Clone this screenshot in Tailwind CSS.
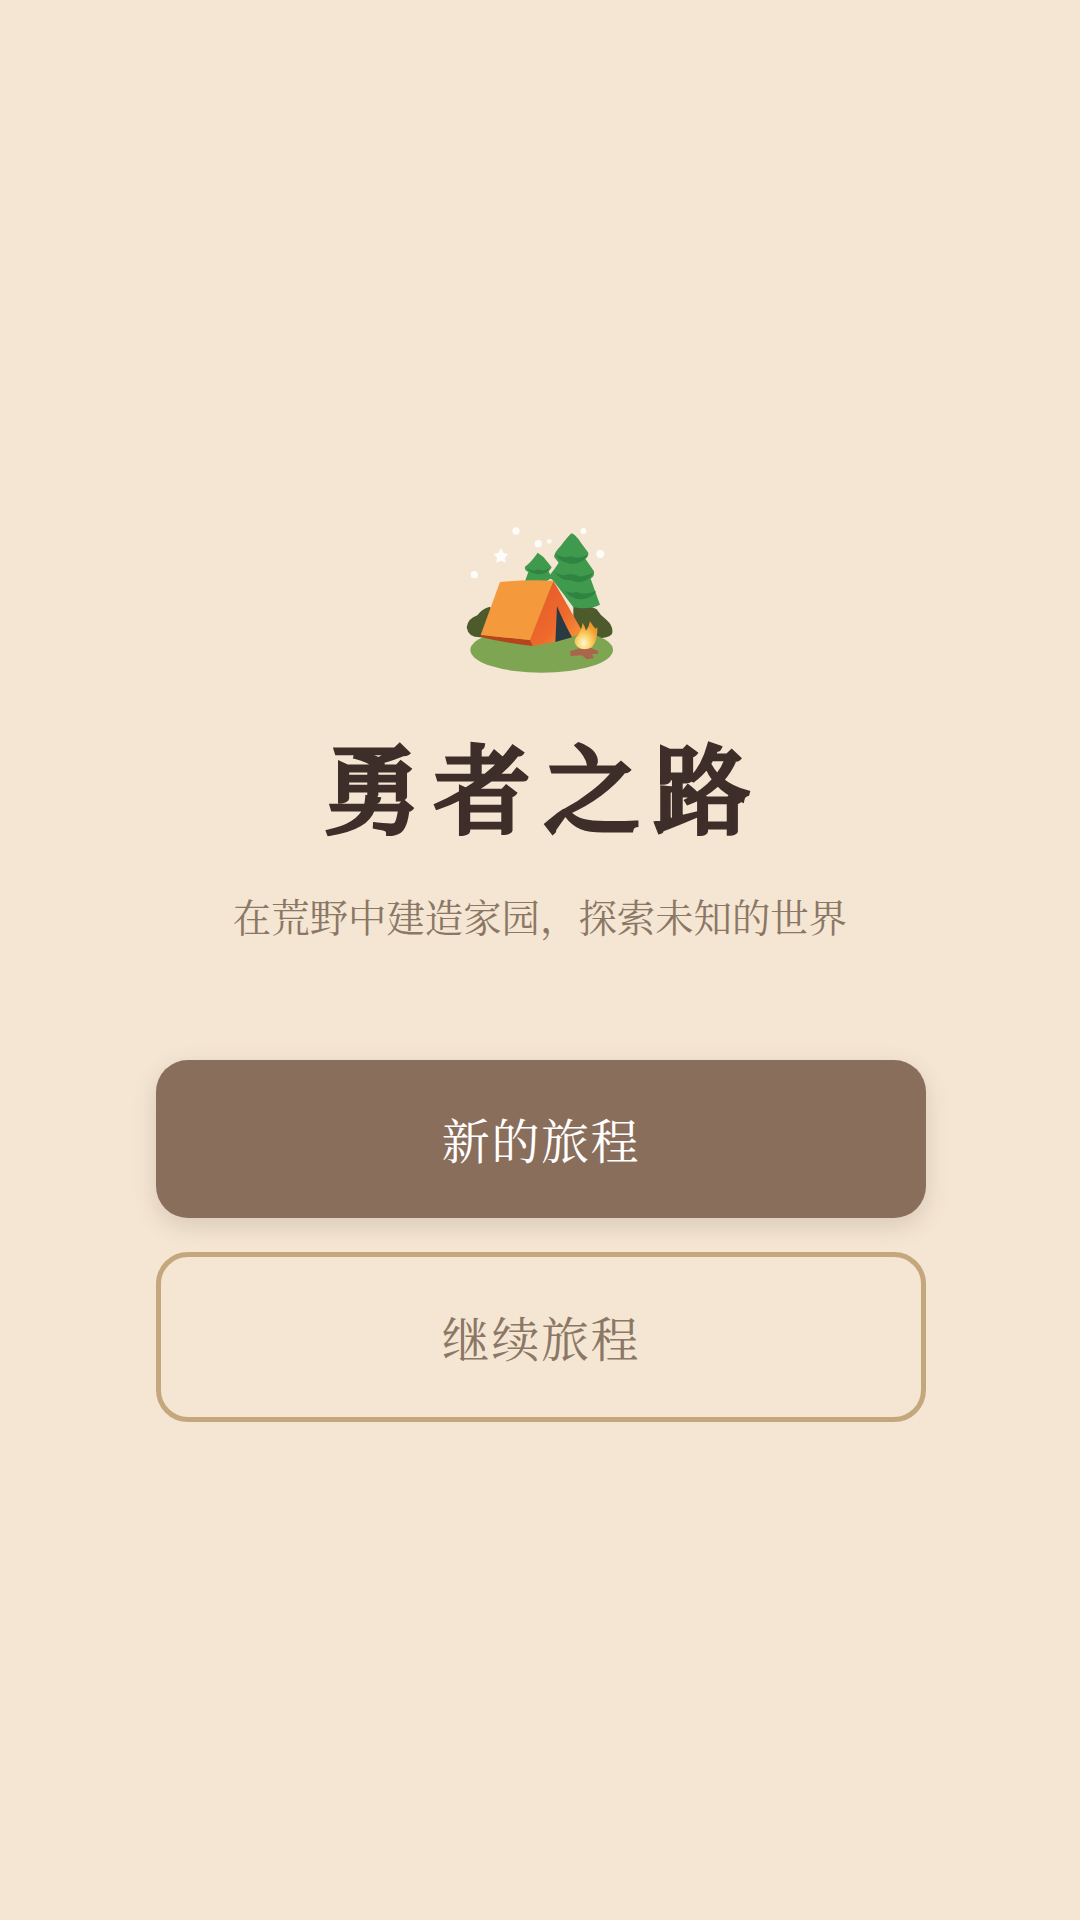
<!doctype html><html><head><meta charset="utf-8"><script src="https://cdn.jsdelivr.net/npm/@tailwindcss/browser@4"></script></head><body class="bg-[#f5e6d3] [font-family:'Noto_Serif_CJK_SC','Liberation_Serif',serif]">
<main class="w-[1080px] h-[1920px] flex flex-col items-center justify-center pt-[12px]">
<svg class="w-[200px] h-[180px] shrink-0 blur-[0.5px]" viewBox="0 0 600 540" aria-label="tent">
<defs>
<linearGradient id="side" x1="0" y1="0" x2="1" y2="1"><stop offset="0" stop-color="#e2552b"/><stop offset=".6" stop-color="#ee6a2c"/><stop offset="1" stop-color="#f9a03a"/></linearGradient>
<radialGradient id="fl" cx=".4" cy=".78" r=".65"><stop offset="0" stop-color="#fff6d4"/><stop offset=".45" stop-color="#fbd36a"/><stop offset="1" stop-color="#f0992c"/></radialGradient>
</defs>
<path d="M80 352 Q84 325 112 316 Q125 296 150 290 L200 385 L120 382 Q84 382 80 352Z" fill="#4d5a2b"/>
<path d="M400 290 Q440 280 470 298 Q482 318 500 330 Q522 350 516 372 Q505 385 470 385 L400 385Z" fill="#4d5a2b"/>
<ellipse cx="305" cy="420" rx="214" ry="68" fill="#7ea652"/>
<path d="M293 128 Q310 138 322 155 L335 172 Q330 182 326 182 L334 205 L300 225 L255 214 L265 186 Q252 180 255 170 Q275 155 293 128Z" fill="#3f9a4e"/>
<path d="M262 174 Q278 186 295 178 Q312 186 330 174 Q326 184 314 190 Q296 196 282 190 Q270 188 262 174Z" fill="#2f8440"/>
<path d="M394 70 Q408 74 424 100 L445 128 Q446 140 436 146 L462 184 Q464 200 452 206 L480 284 Q450 300 400 292 L340 212 L325 200 Q345 176 356 158 L342 140 Q344 126 362 108 Q380 84 394 70Z" fill="#3f9a4e"/>
<path d="M346 132 Q368 148 392 138 Q418 150 442 134 Q436 150 420 156 Q396 166 382 158 Q360 158 346 132Z" fill="#2f8440"/>
<path d="M344 186 Q362 200 378 194 Q398 188 420 200 Q440 198 458 190 Q452 206 432 214 Q410 220 392 210 Q364 214 344 186Z" fill="#2f8440"/>
<path d="M376 242 Q392 252 410 246 Q434 256 468 244 Q462 260 436 266 Q412 272 396 260 Q386 260 376 242Z" fill="#2f8440"/>
<path d="M340 212 Q380 280 430 370 L345 396 L278 408 L262 380Z" fill="url(#side)"/>
<path d="M351 288 Q368 330 396 382 L346 396Z" fill="#2a3a44"/>
<path d="M122 375 L270 390 L278 408 Q190 398 124 382Z" fill="#b6431c"/>
<path d="M180 216 Q260 208 340 212 L270 390 L122 375Z" fill="#f59a3c"/>
<path d="M390 424 L440 408 L476 424 L472 432 L456 432 L462 444 L440 448 L426 436 L392 438Z" fill="#a9664c"/>
<path d="M428 338 Q436 352 438 362 Q448 348 450 334 Q460 350 466 356 L472 352 Q474 392 456 412 Q430 424 412 410 Q398 398 408 382 Q424 366 428 338Z" fill="url(#fl)"/>
<g fill="#ffffff" fill-opacity=".85">
<circle cx="228" cy="63" r="11"/><circle cx="295" cy="101" r="11"/><circle cx="328" cy="94" r="7"/><circle cx="430" cy="63" r="9"/><circle cx="481" cy="132" r="12"/><circle cx="103" cy="194" r="11"/>
<path d="M183 114 L191 129 L205 132 L195 144 L197 158 L183 152 L169 158 L171 144 L161 132 L175 129Z"/>
</g>
</svg>
<h1 class="mt-[34px] pl-[8px] text-[96px] leading-[120px] font-normal tracking-[14px] text-[#3e2e2a] [-webkit-text-stroke:5px_#3e2e2a]">勇者之路</h1>
<p class="mt-[46px] text-[38.4px] leading-[52px] text-[#8b7765]">在荒野中建造家园&#xFF0C;探索未知的世界</p>
<div class="mt-[118px] ml-[2px] w-[770px] flex flex-col gap-[34px]">
<button class="h-[158px] rounded-[32px] bg-[#8a6e5c] text-white text-[48px] tracking-[1.6px] shadow-[0_8px_24px_rgba(62,39,35,0.15)]">新的旅程</button>
<button class="h-[170px] rounded-[32px] border-[5px] border-[#c4a77d] text-[#8b7765] text-[48px] tracking-[1.6px]">继续旅程</button>
</div>
</main>
</body></html>
